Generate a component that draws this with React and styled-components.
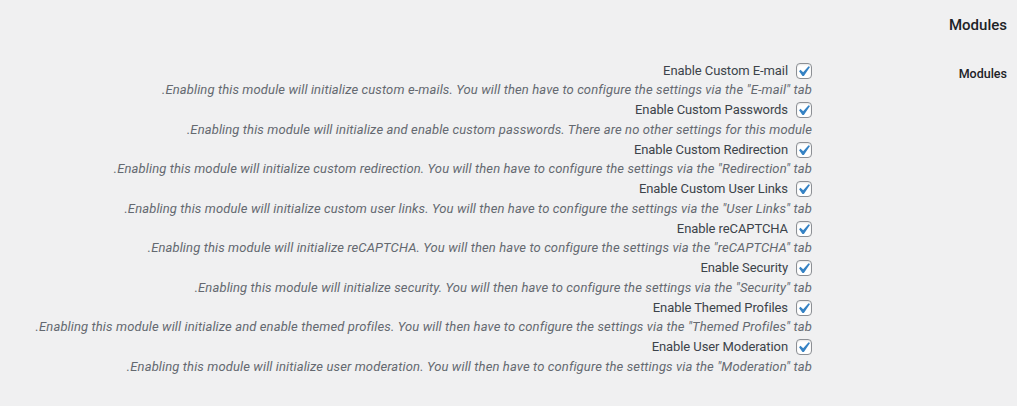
import React from 'react'
import styled, { createGlobalStyle } from 'styled-components'

const modules = [
  { label: 'Enable Custom E-mail', desc: 'Enabling this module will initialize custom e-mails. You will then have to configure the settings via the "E-mail" tab.' },
  { label: 'Enable Custom Passwords', desc: 'Enabling this module will initialize and enable custom passwords. There are no other settings for this module.' },
  { label: 'Enable Custom Redirection', desc: 'Enabling this module will initialize custom redirection. You will then have to configure the settings via the "Redirection" tab.' },
  { label: 'Enable Custom User Links', desc: 'Enabling this module will initialize custom user links. You will then have to configure the settings via the "User Links" tab.' },
  { label: 'Enable reCAPTCHA', desc: 'Enabling this module will initialize reCAPTCHA. You will then have to configure the settings via the "reCAPTCHA" tab.' },
  { label: 'Enable Security', desc: 'Enabling this module will initialize security. You will then have to configure the settings via the "Security" tab.' },
  { label: 'Enable Themed Profiles', desc: 'Enabling this module will initialize and enable themed profiles. You will then have to configure the settings via the "Themed Profiles" tab.' },
  { label: 'Enable User Moderation', desc: 'Enabling this module will initialize user moderation. You will then have to configure the settings via the "Moderation" tab.' },
]

const App = () => {
  return (
    <>
      <GlobalStyle />
      <Wrap>
        <Title>Modules</Title>
        <FormTable>
          <Th>Modules</Th>
          <Td>
            {modules.map((m) => (
              <Item key={m.label}>
                <Label>
                  <Check>
                    <svg viewBox="0 0 20 20" width="21" height="21">
                      <path d="M14.83 4.89l1.34.94-5.81 8.38H9.02L5.78 9.67l1.34-1.25 2.57 2.4z" fill="#3582c4" />
                    </svg>
                  </Check>
                  <span>{m.label}</span>
                </Label>
                <Description>{m.desc}</Description>
              </Item>
            ))}
          </Td>
        </FormTable>
      </Wrap>
    </>
  )
}

export default App

const GlobalStyle = createGlobalStyle`
  html, body {
    margin: 0;
    background: #f0f0f1;
  }
  body {
    font-family: Roboto, "Liberation Sans", sans-serif;
    font-size: 13px;
    color: #3c434a;
  }
`

const Wrap = styled.div`
  direction: rtl;
  padding: 15px 10px 0 0;
  min-height: 391px;
`

const Title = styled.h2`
  margin: 0;
  font-size: 15px;
  font-weight: 500;
  line-height: 20px;
  color: #1d2327;
`

const FormTable = styled.div`
  display: grid;
  grid-template-columns: 195px 1fr;
  margin-top: 20px;
`

const Th = styled.div`
  padding-top: 9px;
  font-size: 12.5px;
  font-weight: 500;
  line-height: 20px;
  color: #1d2327;
`

const Td = styled.div`
  padding-top: 5.75px;
`

const Item = styled.div`
  display: flex;
  flex-direction: column;
`

const Label = styled.label`
  display: flex;
  align-items: center;
  gap: 8px;
  height: 19.5px;
  line-height: 19.5px;
  letter-spacing: -0.08px;
  color: #3c434a;
`

const Check = styled.span`
  position: relative;
  width: 16px;
  height: 16px;
  box-sizing: border-box;
  border: 1px solid #8c8f94;
  border-radius: 4px;
  background: #fff;
  box-shadow: inset 0 1px 2px rgba(0, 0, 0, 0.1);

  svg {
    position: absolute;
    top: -3px;
    left: -4px;
  }
`

const Description = styled.p`
  margin: 0;
  font-style: italic;
  line-height: 20px;
  letter-spacing: 0.12px;
  color: #646970;
`
